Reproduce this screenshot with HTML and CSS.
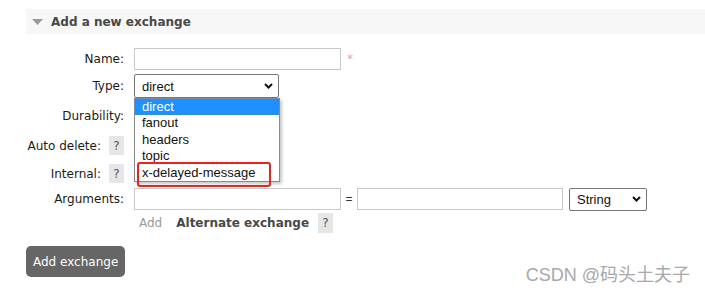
FILE: index.html
```html
<!DOCTYPE html>
<html lang="en">
<head>
  <meta charset="UTF-8" />
  <title>Add a new exchange</title>
  <link rel="stylesheet" href="styles.css">
</head>
<body>

  <div class="section">
    <h2 class="head">
      <svg class="tri" width="11" height="6" viewBox="0 0 11 6"><path d="M0 0 H11 L5.5 6 Z" fill="#9a9a9a"/></svg>
      Add a new exchange
    </h2>

    <div class="form">
      <div class="row r1">
        <div class="lbl">Name:</div>
        <div class="field">
          <div class="input w-name"></div>
          <span class="req">*</span>
        </div>
      </div>

      <div class="row r2">
        <div class="lbl">Type:</div>
        <div class="field">
          <div class="select w-type">
            <span>direct</span>
            <svg class="chev" width="9" height="6" viewBox="0 0 9 6"><path d="M1 1 L4.5 4.5 L8 1" fill="none" stroke="#111" stroke-width="2"/></svg>
            <div class="menu">
              <div class="opt sel">direct</div>
              <div class="opt">fanout</div>
              <div class="opt">headers</div>
              <div class="opt">topic</div>
              <div class="opt">x-delayed-message</div>
              <div class="mark"></div>
            </div>
          </div>
        </div>
      </div>

      <div class="row r3">
        <div class="lbl">Durability:</div>
      </div>

      <div class="row r4">
        <div class="lbl"><span>Auto delete:</span><span class="help">?</span></div>
      </div>

      <div class="row r5">
        <div class="lbl"><span>Internal:</span><span class="help">?</span></div>
      </div>

      <div class="row r6">
        <div class="lbl">Arguments:</div>
        <div class="field">
          <div class="input w-arg"></div>
          <span class="eq">=</span>
          <div class="input w-arg2"></div>
          <div class="select w-str">
            <span>String</span>
            <svg class="chev" width="9" height="6" viewBox="0 0 9 6"><path d="M1 1 L4.5 4.5 L8 1" fill="none" stroke="#111" stroke-width="2"/></svg>
          </div>
        </div>
      </div>

      <div class="row r7">
        <div class="lbl"></div>
        <div class="field">
          <span class="add">Add</span>
          <b class="alt">Alternate exchange</b>
          <span class="help tall">?</span>
        </div>
      </div>
    </div>

    <button class="btn" type="button">Add exchange</button>
  </div>

  <div class="mark-csdn">CSDN @码头土夫子</div>

</body>
</html>
```

FILE: styles.css
```css
body { margin: 0; font-family: "DejaVu Sans", Verdana, sans-serif; font-size: 12px; color: #1a1a1a; background: #fff; }

.section { margin: 9px 0 0 26px; }
.head { margin: 0; height: 25px; background: #f7f7f7; display: flex; align-items: center; gap: 8px; padding-left: 6px; font-size: 12px; font-weight: bold; color: #484848; }
.tri { display: block; }

.form { padding-top: 11px; }
.row { display: flex; align-items: center; }
.r1 { height: 27px; }
.r2 { height: 28px; }
.r3 { height: 31px; }
.r4 { height: 29px; }
.r5 { height: 27px; }
.r6 { height: 24px; }
.r7 { height: 24px; }

.lbl { width: 98px; display: flex; justify-content: flex-end; align-items: center; gap: 8px; }
.field { margin-left: 10px; display: flex; align-items: center; }

.input { height: 22px; box-sizing: border-box; border: 1px solid #c8c8c8; background: #fff; }
.w-name { width: 207px; }
.w-arg { width: 207px; }
.w-arg2 { width: 206px; }
.eq { width: 16px; text-align: center; font-family: "Liberation Sans", Arial, sans-serif; font-size: 12px; color: #333; }
.req { align-self: flex-start; margin: 4px 0 0 6px; color: #ff9b9b; font-size: 12px; }

.select { position: relative; height: 24px; box-sizing: border-box; border: 1px solid #767676; border-radius: 2px; background: #fff; display: flex; align-items: center; justify-content: space-between; padding: 0 5px 0 7px; font-family: "Liberation Sans", Arial, sans-serif; font-size: 13px; color: #111; }
.w-type { width: 145px; }
.w-str { width: 78px; height: 23px; margin-left: 6px; }
.chev { display: block; }

.menu { position: absolute; left: -1px; top: 23px; width: 146px; box-sizing: border-box; border: 1px solid #8a8a8a; background: #fff; box-shadow: 2px 2px 3px rgba(0, 0, 0, 0.22); z-index: 5; }
.opt { height: 16.4px; line-height: 16.4px; padding-left: 7px; font-size: 13px; color: #111; }
.opt.sel { background: #1e90ff; color: #fff; }
.mark { position: absolute; left: 2px; top: 63px; width: 134px; height: 25px; box-sizing: border-box; border: 2px solid #f0201c; border-radius: 3px; }

.help { display: inline-flex; width: 15px; height: 19px; align-items: center; justify-content: center; background: #e6e6e6; color: #555; font-size: 12px; }
.help.tall { height: 20px; }
.add { margin-left: 5px; color: #999; }
.alt { margin-left: 14px; color: #484848; }
.r7 .help { margin-left: 9px; }

.btn { margin-top: 11px; height: 31px; padding: 0 7px; border: none; border-radius: 5px; background: #666; color: #fff; font-family: "DejaVu Sans", Verdana, sans-serif; font-size: 12px; cursor: pointer; }

.mark-csdn { position: absolute; right: 15px; bottom: 9px; font-family: "Liberation Sans", Arial, "Noto Sans CJK SC", sans-serif; font-size: 18px; color: #a8a8a8; }
```
